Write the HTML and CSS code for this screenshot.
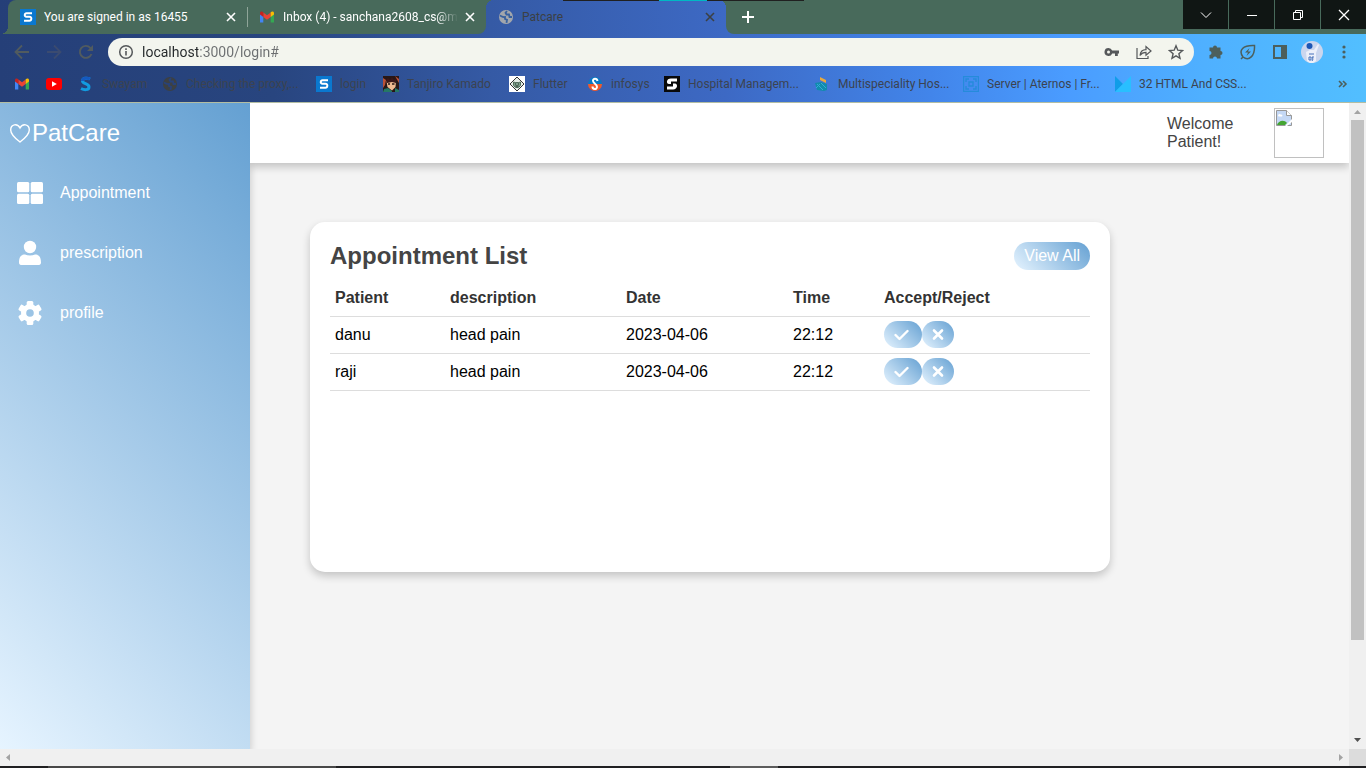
FILE: index.html
```html
<!DOCTYPE html>
<html lang="en">
<head>
<meta charset="utf-8">
<title>Patcare</title>
<link rel="stylesheet" href="styles.css">
</head>
<body>
<svg width="0" height="0" class="defs" aria-hidden="true">
  <defs>
    <symbol id="close" viewBox="0 0 16 16"><path d="M4 4l8 8M12 4l-8 8" fill="none" stroke="currentColor" stroke-width="1.600"/></symbol>
    <symbol id="globe" viewBox="0 0 16 16"><circle cx="8" cy="8" r="7" fill="currentColor"/><path d="M2 6.500c1.500.5 2.500 2 5 1.500v2l2 .8-.5 3M9 2L7.500 3.800l1 1.700h2.500l.5 2.500h2.500" fill="none" stroke="var(--hole)" stroke-width="1.800"/></symbol>
    <symbol id="gmail" viewBox="0 0 16 16"><path d="M1 4v9.500h3.300V7z" fill="#4285f4"/><path d="M15 4v9.500h-3.300V7z" fill="#34a853"/><path d="M4.300 3.500V8L8 10.800 11.700 8V3.500L8 6.300z" fill="#ea4335"/><path d="M1 4.300c0-2 2-2.300 3.300-1V8L1 5.600z" fill="#c5221f"/><path d="M15 4.300c0-2-2-2.300-3.300-1V8L15 5.600z" fill="#fbbc04"/></symbol>
    <symbol id="slogo" viewBox="0 0 16 16"><path d="M0 0h16v16H0z" fill="#0a78cf"/><path d="M12 4.200H6.500c-2 0-2.600 3.600 0 3.600h3c2.700 0 2.200 4-.1 4H4" fill="none" stroke="#fff" stroke-width="2"/></symbol>
    <symbol id="check" viewBox="0 0 18 16"><path d="M1.500 8l4 4 8-8" fill="none" stroke="currentColor" stroke-width="2.400" stroke-linecap="round" stroke-linejoin="round"/></symbol>
    <symbol id="cross" viewBox="0 0 12 16"><path d="M2 3.500l8 8M10 3.500l-8 8" fill="none" stroke="currentColor" stroke-width="2.600" stroke-linecap="round"/></symbol>
  </defs>
</svg>

<header class="browser">
  <div class="overlay-line"></div>
  <div class="tabstrip">
    <div class="strip-edge"></div>
    <div class="tabs-idle">
      <div class="tab">
        <svg class="i16"><use href="#slogo"/></svg>
        <span class="tab-title">You are signed in as 16455</span>
        <button class="icon-btn" aria-label="Close tab"><svg class="i16"><use href="#close"/></svg></button>
      </div>
      <div class="tab tab-divided">
        <svg class="i16"><use href="#gmail"/></svg>
        <span class="tab-title fade">Inbox (4) - sanchana2608_cs@me</span>
        <button class="icon-btn" aria-label="Close tab"><svg class="i16"><use href="#close"/></svg></button>
      </div>
    </div>
    <div class="tab tab-active">
      <svg class="i16 globe-light"><use href="#globe"/></svg>
      <span class="tab-title">Patcare</span>
      <button class="icon-btn" aria-label="Close tab"><svg class="i16"><use href="#close"/></svg></button>
    </div>
    <div class="strip-rest">
      <button class="icon-btn new-tab" aria-label="New tab"><svg class="i16" viewBox="0 0 16 16"><path d="M8 2v12M2 8h12" stroke="#fff" stroke-width="2"/></svg></button>
      <div class="window-controls">
        <button aria-label="Search tabs"><svg class="i16" viewBox="0 0 16 16"><path d="M3 5.500l5 5 5-5" fill="none" stroke="#fff"/></svg></button>
        <button aria-label="Minimize"><svg class="i16" viewBox="0 0 16 16"><path d="M3 8.500h10" stroke="#fff"/></svg></button>
        <button aria-label="Restore"><svg class="i16" viewBox="0 0 16 16"><path d="M3.500 5.500h7v7h-7zM5.500 5V3.500h7v7H11" fill="none" stroke="#fff"/></svg></button>
        <button aria-label="Close"><svg class="i16" viewBox="0 0 16 16"><path d="M3 3l10 10M13 3L3 13" stroke="#fff" stroke-width="1.300"/></svg></button>
      </div>
    </div>
  </div>

  <div class="toolbar">
    <button class="icon-btn nav-back" aria-label="Back"><svg class="i16" viewBox="0 0 16 16"><path d="M15 8H2M8 1.500L1.500 8 8 14.500" fill="none" stroke="currentColor" stroke-width="1.800"/></svg></button>
    <button class="icon-btn nav-forward" aria-label="Forward"><svg class="i16" viewBox="0 0 16 16"><path d="M1 8h13M8 1.500L14.500 8 8 14.500" fill="none" stroke="currentColor" stroke-width="1.800"/></svg></button>
    <button class="icon-btn nav-back" aria-label="Reload"><svg class="i16" viewBox="0 0 16 16"><path d="M13.500 10A6 6 0 1 1 12.300 3.800L14 5.500" fill="none" stroke="currentColor" stroke-width="1.900"/><path d="M15 1v6H9z" fill="currentColor"/></svg></button>
    <div class="omnibox">
      <svg class="i16" viewBox="0 0 16 16"><circle cx="8" cy="8" r="6.300" fill="none" stroke="#55585a" stroke-width="1.500"/><path d="M8 7v4.500M8 4.300V6" stroke="#55585a" stroke-width="1.600"/></svg>
      <input class="url" type="text" aria-label="Address" value="localhost:3000/login#">
      <button class="icon-btn" aria-label="Passwords"><svg class="i16" viewBox="0 0 16 16"><path fill-rule="evenodd" d="M4.500 4a4 4 0 0 1 3.700 2.500H15v3h-1.200V12H11V9.500H8.200A4 4 0 1 1 4.500 4zm0 2.500a1.500 1.500 0 1 0 0 3 1.500 1.500 0 0 0 0-3z" fill="#55585a"/></svg></button>
      <button class="icon-btn" aria-label="Share"><svg class="i16" viewBox="0 0 16 16"><path d="M1 4v10.500h11V12M4 11.500c.5-4 2.500-5.800 6-5.800V2.500L15 7l-5 4.200V8.400c-3 0-4.600 1-6 3.100z" fill="none" stroke="#55585a" stroke-width="1.200"/></svg></button>
      <button class="icon-btn" aria-label="Bookmark"><svg class="i16" viewBox="0 0 16 16"><path d="M8 1.800l1.800 4.400 4.700.4-3.600 3.100 1.100 4.600L8 11.800l-4 2.500 1.100-4.600L1.500 6.600l4.700-.4z" fill="none" stroke="#55585a" stroke-width="1.400"/></svg></button>
    </div>
    <div class="extensions">
      <button class="icon-btn" aria-label="Extensions"><svg class="i16" viewBox="0 0 16 16"><path d="M1.500 3.500H5a2 2 0 1 1 4 0h3.500V7a2 2 0 1 1 0 4v3.500H9a2 2 0 0 0-4 0H1.500V11a2 2 0 0 0 0-4z" fill="#4c5f5c"/></svg></button>
      <button class="icon-btn" aria-label="Energy saver"><svg class="i16" viewBox="0 0 16 16"><path d="M3 13c-5-7 0-12 11.500-11.500C15 12 9 17.500 3 13zM1 15l2-2" fill="none" stroke="#4c5f5c" stroke-width="1.500"/><path d="M9.500 4L5 8.500h3L6.500 12 11 7.500H8z" fill="#4c5f5c"/></svg></button>
      <button class="icon-btn" aria-label="Side panel"><svg class="i16" viewBox="0 0 16 16"><path d="M2 2h12v12H2z" fill="none" stroke="#4c5f5c" stroke-width="2"/><path d="M9 2h5v12H9z" fill="#4c5f5c"/></svg></button>
      <button class="icon-btn avatar" aria-label="Profile"><svg viewBox="0 0 22 22"><circle cx="11" cy="11" r="11" fill="#cbd6ee"/><path d="M5 11l4-2h4l4-6 1 1-3 8v8c-3 3-6 3-9 0z" fill="#edf0fa"/><circle cx="8.500" cy="5" r="3" fill="#1d56b5"/><path d="M8 13h5M8 16h2v3H8zM13 16h-2l1 2-1 2" fill="none" stroke="#4771ba"/></svg></button>
      <button class="icon-btn" aria-label="Menu"><svg class="i16" viewBox="0 0 16 16"><g fill="#4c5f5c"><circle cx="8" cy="3" r="1.600"/><circle cx="8" cy="8" r="1.600"/><circle cx="8" cy="13" r="1.600"/></g></svg></button>
    </div>
  </div>

  <nav class="bookmarks" aria-label="Bookmarks">
    <a href="#" aria-label="Gmail"><svg class="i16"><use href="#gmail"/></svg></a>
    <a href="#" aria-label="YouTube"><svg class="i16" viewBox="0 0 16 16"><rect y="2" width="16" height="12" rx="3" fill="#f00"/><path d="M6 5.300v5.400L10.800 8z" fill="#fff"/></svg></a>
    <a href="#"><svg class="i16" viewBox="0 0 16 16"><path d="M12 3C9 1.500 4.500 2 4.500 5s6.500 2.500 6.500 6-5 3-8 1.500" fill="none" stroke="#129be0" stroke-width="3"/><path d="M12 3C9 1.500 4.500 2 4.500 5" fill="none" stroke="#1559c0" stroke-width="3"/></svg><span>Swayam</span></a>
    <a href="#"><svg class="i16 globe-dark"><use href="#globe"/></svg><span>Checking the proxy,...</span></a>
    <a href="#"><svg class="i16"><use href="#slogo"/></svg><span>login</span></a>
    <a href="#"><svg class="i16" viewBox="0 0 16 16"><path d="M0 0h16v16H0z" fill="#281716"/><path d="M0 2l3 2-1 5-2 3zM12 0l4 3v4z" fill="#bb5137"/><path d="M3.500 5L8 4l5 1-.5 6L9 14.500 4.500 11z" fill="#efba91"/><path d="M3 4l2-2 2 2 2-3 2 3 2-1v4L9 6 4 7z" fill="#3b1718"/><path d="M5 8h2M9 8h2.500" stroke="#281716" stroke-width="1.500"/><path d="M1 13l4-1 4 3v1H0zM12 12l4 2v2h-4z" fill="#257866"/></svg><span>Tanjiro Kamado</span></a>
    <a href="#"><svg class="i16" viewBox="0 0 16 16"><path d="M0 0h16v16H0z" fill="#fff"/><path d="M8 1l7 7-7 7-7-7z" fill="#e5ede7" stroke="#333"/><path d="M4.500 6l2 .5h3l2-.5v3.500l-2 2h-3l-2-2z" fill="#7fa08b" stroke="#3e5a49" stroke-width=".8"/><path d="M6 8h1M9 8h1M6.500 10h3" stroke="#1d2b24"/></svg><span>Flutter</span></a>
    <a href="#"><svg class="i16" viewBox="0 0 16 16"><path d="M1 8a7 7 0 0 1 14 0z" fill="#087ac4"/><path d="M1 8a7 7 0 0 0 14 0z" fill="#f15a2b"/><path d="M10.500 5C10 2 6 2 6 4.800S10.300 8 10 11s-4.500 2.500-4.500-.5" fill="none" stroke="#fff" stroke-width="2"/></svg><span>infosys</span></a>
    <a href="#"><svg class="i16" viewBox="0 0 16 16"><path d="M0 0h16v16H0z" fill="#090909"/><path d="M13 2.500H7C2 2.500 2 8 5 8h2V5.500h6zM3 13.500h6c5 0 5-6 2-6H9v3H3z" fill="#fff"/></svg><span>Hospital Managem...</span></a>
    <a href="#"><svg class="i16" viewBox="0 0 16 16"><path d="M6 1l6 3v3L6 4z" fill="#e8a93e"/><path d="M1 7l6-1 6 2v6l-3 1-7-1z" fill="#108cad"/><path d="M3 8l6 6M7 7l5 5M2 12l4-4" stroke="#36a8d8"/></svg><span>Multispeciality Hos...</span></a>
    <a href="#"><svg class="i16" viewBox="0 0 16 16"><path d="M.5.500h15v15H.500zM3 6V3h3M10 3h3v3M13 10v3h-3M6 13H3v-3M6 6h4v4H6z" fill="none" stroke="#258bdb" stroke-width="1.400"/></svg><span>Server | Aternos | Fr...</span></a>
    <a href="#"><svg class="i16" viewBox="0 0 16 16"><path d="M0 0l8 8-8 8z" fill="#109de8"/><path d="M16 0L8 8 0 16h16z" fill="#29bfff"/></svg><span>32 HTML And CSS...</span></a>
    <button class="icon-btn more" aria-label="More bookmarks"><svg class="i16" viewBox="0 0 16 16"><path d="M4 5l3 3-3 3M8 5l3 3-3 3" fill="none" stroke="#4c5f5c" stroke-width="1.600"/></svg></button>
  </nav>
</header>

<div class="viewport">
  <div class="app">
    <aside class="sidebar">
      <h1 class="brand"><svg class="heart" viewBox="0 0 22 22"><path d="M11 20C5 15.500 1.700 12 1.700 8 1.700 2 8.500 1 11 6c2.500-5 9.300-4 9.300 2 0 4-3.300 7.500-9.300 12z" fill="none" stroke="#fff" stroke-width="1.400"/></svg>PatCare</h1>
      <nav class="menu" aria-label="Main">
        <a href="#"><svg viewBox="0 0 26 26"><g fill="#fff"><rect y="2" width="12.300" height="10.300" rx="1.500"/><rect x="13.700" y="2" width="12.300" height="10.300" rx="1.500"/><rect y="13.700" width="12.300" height="10.300" rx="1.500"/><rect x="13.700" y="13.700" width="12.300" height="10.300" rx="1.500"/></g></svg>Appointment</a>
        <a href="#"><svg viewBox="0 0 26 26"><circle cx="13" cy="7" r="6.200" fill="#fff"/><path d="M2 22.500c0-6 2.500-8 6-8 3 1.300 7 1.300 10 0 3.500 0 6 2 6 8 0 1.500-.8 2.500-2 2.500H4c-1.200 0-2-1-2-2.500z" fill="#fff"/></svg>prescription</a>
        <a href="#"><svg viewBox="0 0 26 26"><g fill="#fff"><circle cx="13" cy="13" r="9"/><rect x="9.700" y="1" width="6.600" height="24" rx="1.500"/><rect x="9.700" y="1" width="6.600" height="24" rx="1.500" transform="rotate(60 13 13)"/><rect x="9.700" y="1" width="6.600" height="24" rx="1.500" transform="rotate(120 13 13)"/></g><circle cx="13" cy="13" r="3.800" fill="#9cc4e5"/></svg>profile</a>
      </nav>
    </aside>
    <div class="page">
      <div class="topbar">
        <p class="welcome">Welcome Patient!</p>
        <div class="photo" role="img" aria-label="Patient photo"><svg class="i16" viewBox="0 0 16 16"><path d="M.5.500h10l5 5v10H.500z" fill="#c4d8f5" stroke="#989898"/><path d="M2 5.500c0-1.500 2-2 2.500-1 1.500-.5 2.500 1 1.500 2H2.500z" fill="#fff"/><path d="M1 15c1-4 7-6 10-2l-2 2z" fill="#44a532"/><path d="M10.500.500v5h5" fill="#fff" stroke="#989898"/><path d="M16 9l-7 7h2l5-4z" fill="#fff"/></svg></div>
      </div>
      <main class="content">
        <section class="card">
          <div class="card-head">
            <h2>Appointment List</h2>
            <a class="pill" href="#">View All</a>
          </div>
          <table>
            <thead><tr><th class="c-name">Patient</th><th class="c-desc">description</th><th class="c-date">Date</th><th class="c-time">Time</th><th>Accept/Reject</th></tr></thead>
            <tbody>
              <tr><td>danu</td><td>head pain</td><td>2023-04-06</td><td>22:12</td><td><div class="actions"><button class="pill" aria-label="Accept danu"><svg class="check"><use href="#check"/></svg></button><button class="pill" aria-label="Reject danu"><svg class="cross"><use href="#cross"/></svg></button></div></td></tr>
              <tr><td>raji</td><td>head pain</td><td>2023-04-06</td><td>22:12</td><td><div class="actions"><button class="pill" aria-label="Accept raji"><svg class="check"><use href="#check"/></svg></button><button class="pill" aria-label="Reject raji"><svg class="cross"><use href="#cross"/></svg></button></div></td></tr>
            </tbody>
          </table>
        </section>
      </main>
    </div>
  </div>
  <div class="scroll-v">
    <svg viewBox="0 0 17 17"><path d="M5 11h7L8.500 7z" fill="#a3a3a3"/></svg>
    <div class="track"><div class="thumb"></div></div>
    <svg viewBox="0 0 17 17"><path d="M5 6h7l-3.500 4z" fill="#505050"/></svg>
  </div>
  <div class="scroll-h">
    <svg viewBox="0 0 17 17"><path d="M10 5v7L6 8.500z" fill="#a3a3a3"/></svg>
    <svg viewBox="0 0 17 17"><path d="M7 5v7l4-3.500z" fill="#a3a3a3"/></svg>
  </div>
  <div class="scroll-corner"></div>
</div>
<div class="taskbar"><div class="task-search"></div><div class="task-app"></div></div>
</body>
</html>
```

FILE: styles.css
```css
:root {
  --strip: #486a5b;
  --wash: linear-gradient(45deg, #e6f4ff, #64a0d2);
}

* { box-sizing: border-box; }

body {
  margin: 0;
  min-height: 100vh;
  display: flex;
  flex-direction: column;
  font-family: "Liberation Sans", Arial, sans-serif;
  font-size: 16px;
  background: #f4f4f4;
}

h1, h2, p { margin: 0; }
a { color: inherit; text-decoration: none; }
button { font: inherit; border: 0; padding: 0; background: none; color: inherit; }
svg { display: block; flex: none; }
.defs { position: absolute; }
.i16 { width: 16px; height: 16px; }
.icon-btn { display: grid; place-items: center; }

/* Browser frame */
.browser {
  position: relative;
  font-family: Roboto, "Segoe UI", sans-serif;
  font-size: 12px;
  background: linear-gradient(88deg, #253f78 0%, #28457f 20%, #355aa5 36%, #3d69c4 53%, #4285ea 68%, #4a9cff 78%, #4fb0ff 88%, #52bfff 100%);
  border-bottom: 1px solid #b3bda2;
}

.overlay-line {
  position: absolute;
  top: 0;
  left: 563px;
  width: 241px;
  height: 1px;
  background: linear-gradient(90deg, #202020 96px, #00b8c4 96px 144px, #202020 144px);
}

.tabstrip { display: flex; height: 34px; }
.strip-edge {
  width: 8px;
  background: radial-gradient(circle at 0 0, transparent 8px, var(--strip) 8px) 0 100% / 8px 8px no-repeat;
}
.tabs-idle {
  display: flex;
  background: var(--strip);
  border-radius: 8px 0 8px 0;
  color: #fff;
}
.tab {
  width: 240px;
  height: 34px;
  display: flex;
  align-items: center;
  gap: 4px;
  padding: 0 8px 0 12px;
}
.tab > svg { margin-right: 4px; }
.tabs-idle .tab { width: 239px; }
.tab-divided {
  background: linear-gradient(#8fa599, #8fa599) 0 50% / 1px 20px no-repeat;
}
.tab-title { flex: 1; overflow: hidden; white-space: nowrap; }
.fade { mask-image: linear-gradient(90deg, #000 88%, transparent); }
.tab-active {
  color: #3c4043;
  background:
    radial-gradient(circle at 100% 100%, transparent 8px, var(--strip) 8px) 0 0 / 8px 8px no-repeat,
    radial-gradient(circle at 0 100%, transparent 8px, var(--strip) 8px) 100% 0 / 8px 8px no-repeat;
}
.globe-light { color: #a2a6ac; --hole: #37609f; }
.globe-dark { color: #3c4043; --hole: #28427a; }
.strip-rest {
  flex: 1;
  display: flex;
  justify-content: space-between;
  background: var(--strip);
  border-bottom-left-radius: 8px;
}
.new-tab { width: 44px; height: 34px; }
.window-controls { display: flex; gap: 1px; height: 29px; }
.window-controls button {
  width: 45px;
  display: grid;
  place-items: center;
  background: #101614;
}

.toolbar {
  height: 36px;
  display: flex;
  align-items: center;
  gap: 16px;
  padding: 0 14px;
}
.nav-back { color: #515b5f; }
.nav-forward { color: #3b4b70; }
.omnibox {
  flex: 1;
  height: 28px;
  margin-left: -2px;
  padding: 0 10px;
  display: flex;
  align-items: center;
  gap: 16px;
  border-radius: 14px;
  background: #f3f5ee;
}
.url {
  flex: 1;
  min-width: 0;
  height: 28px;
  margin-left: -8px;
  padding: 0;
  border: 0;
  outline: 0;
  font-family: inherit;
  font-size: 14px;
  color: transparent;
  background: linear-gradient(90deg, #24282a 56px, #6c6f71 56px);
  background-clip: text;
  -webkit-background-clip: text;
}
.extensions { display: flex; align-items: center; gap: 16px; margin-left: -2px; }
.avatar { width: 22px; margin: 0 -3px; }
.avatar svg { width: 22px; height: 22px; }

.bookmarks {
  height: 32px;
  display: grid;
  grid-template-columns: 32px 32px 84px 154px 67px 126px 78px 77px 150px 149px 152px auto 16px;
  align-items: center;
  padding: 0 15px 4px 14px;
  color: #3c4350;
  overflow: hidden;
  white-space: nowrap;
}
.bookmarks a { display: flex; align-items: center; gap: 8px; }

/* Page area with its scrollbars */
.viewport {
  flex: 1;
  display: grid;
  grid-template-columns: 1fr 17px;
  grid-template-rows: 1fr 17px;
}
.app { display: flex; }
.scroll-v { display: flex; flex-direction: column; background: #f0f0f0; }
.track { flex: 1; padding: 0 2px; }
.thumb { height: 85%; background: #c1c1c1; }
.scroll-h { display: flex; justify-content: space-between; background: #f0f0f0; }
.scroll-v svg, .scroll-h svg { width: 17px; height: 17px; }
.scroll-corner { background: #dcdcdc; }

.sidebar {
  position: relative;
  width: 250px;
  flex: none;
  color: #fff;
  background: var(--wash);
  box-shadow: 0 4px 8px rgba(0, 0, 0, 0.2);
  clip-path: inset(0 -10px 0 0);
}
.brand {
  height: 60px;
  padding-left: 9px;
  display: flex;
  align-items: center;
  gap: 1px;
  font-size: 24px;
  font-weight: 400;
}
.heart { width: 22px; height: 22px; }
.menu a {
  height: 60px;
  padding-left: 17px;
  display: flex;
  align-items: center;
  gap: 17px;
}
.menu svg { width: 26px; height: 26px; }

.page { flex: 1; min-width: 0; }
.topbar {
  position: relative;
  height: 60px;
  padding-right: 25px;
  display: flex;
  align-items: center;
  justify-content: flex-end;
  gap: 25px;
  color: #444;
  background: #fff;
  box-shadow: 0 4px 8px rgba(0, 0, 0, 0.2);
  clip-path: inset(0 0 -14px 0);
}
.welcome { width: 82px; line-height: 18px; }
.photo { width: 50px; height: 50px; padding: 1px; border: 1px solid #c0c0c0; }

.content { padding: 59px 60px; }
.card {
  max-width: 800px;
  min-height: 350px;
  padding: 20px;
  border-radius: 15px;
  background: #fff;
  box-shadow: 0 4px 8px rgba(0, 0, 0, 0.2);
}
.card-head {
  display: flex;
  align-items: center;
  justify-content: space-between;
  height: 28px;
  margin-bottom: 10px;
}
.card-head h2 { font-size: 24px; color: #444; }
.pill {
  display: block;
  padding: 5px 10px;
  border-radius: 14px;
  color: #fff;
  line-height: 18px;
  background: var(--wash);
}
table { width: 100%; border-collapse: collapse; table-layout: fixed; }
th, td {
  height: 37px;
  padding: 0 5px;
  text-align: left;
  border-bottom: 1px solid #ddd;
}
th { height: 36px; color: #333; }
td { color: #000; }
.c-name { width: 115px; }
.c-desc { width: 176px; }
.c-date { width: 167px; }
.c-time { width: 91px; }
.actions { display: flex; }
.actions .pill { height: 27px; }
.check { width: 18px; height: 16px; }
.cross { width: 12px; height: 16px; }

.taskbar { height: 2px; display: flex; background: #202022; padding-left: 48px; gap: 394px; }
.task-search { width: 288px; background: #484848; }
.task-app { width: 48px; background: #5c5c5c; }
```
